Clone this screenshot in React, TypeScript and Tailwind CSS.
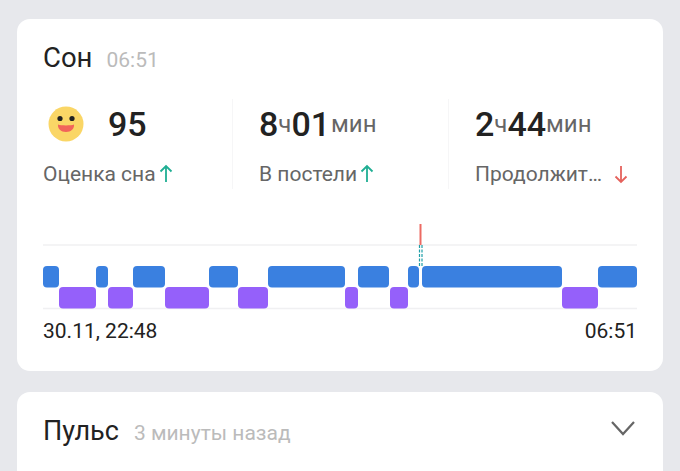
import React from 'react';

const FONT = 'font-["Roboto","Noto_Sans",sans-serif]';

const awake: [number, number][] = [
  [43, 59], [96, 108], [133, 165], [209, 238], [268, 345], [358, 389], [408, 419], [422, 562], [598, 637],
];
const light: [number, number][] = [
  [59, 96], [108, 133], [165, 209], [238, 268], [345, 358], [390, 408], [562, 598],
];

const Arrow: React.FC<{ down?: boolean; color: string }> = ({ down, color }) => (
  <svg width="16" height="20" viewBox="0 0 16 20" fill="none" stroke={color} strokeWidth="1.8">
    {down ? (
      <path d="M8 2v16M2.5 12.5L8 18l5.5-5.5" />
    ) : (
      <path d="M8 18V2M2.5 7.5L8 2l5.5 5.5" />
    )}
  </svg>
);

const Smiley = () => (
  <svg width="36" height="36" viewBox="0 0 36 36">
    <circle cx="18" cy="18" r="17.5" fill="#fad666" />
    <circle cx="12" cy="12.5" r="2.6" fill="#222" />
    <circle cx="24" cy="12.5" r="2.6" fill="#222" />
    <path d="M10 18.5c3 1.2 13 1.2 16 0 .6 4-3 7.500-8 7.500s-8.600-3.500-8-7.500z" fill="#f2645a" />
  </svg>
);

const Num: React.FC<{ children: React.ReactNode }> = ({ children }) => (
  <span className="text-[34px] font-medium text-[#222]">{children}</span>
);
const Unit: React.FC<{ children: React.ReactNode }> = ({ children }) => (
  <span className="text-[24px] text-[#666]">{children}</span>
);

const SleepChart = () => (
  <svg width="646" height="95" viewBox="17 224 646 95" className="block">
    <line x1="43" x2="637" y1="245" y2="245" stroke="#f0f0f2" strokeWidth="1.500" />
    <line x1="43" x2="637" y1="308.500" y2="308.500" stroke="#f0f0f2" strokeWidth="1.500" />
    {awake.map(([a, b]) => (
      <rect key={a} x={a} y={266} width={b - a} height={21.500} rx={4} fill="#3a80e0" />
    ))}
    {light.map(([a, b]) => (
      <rect key={a} x={a} y={287} width={b - a} height={21.500} rx={4} fill="#9560fa" />
    ))}
    <line x1="420.500" x2="420.500" y1="224" y2="245" stroke="#ec6a62" strokeWidth="2" />
    <line x1="419.500" x2="419.500" y1="245" y2="267" stroke="#1f9fa8" strokeWidth="1.200" strokeDasharray="3 1.500" />
    <line x1="422" x2="422" y1="245" y2="267" stroke="#1f9fa8" strokeWidth="1.200" strokeDasharray="3 1.500" />
  </svg>
);

export default function App() {
  return (
    <div className={`${FONT} h-[471px] w-[680px] overflow-hidden bg-[#e7e8ec] px-[17px] pt-[19px]`}>
      {/* Sleep card */}
      <div className="h-[352px] rounded-[13px] bg-white">
        <div className="flex items-baseline gap-[14px] px-[26px] pt-[21px] leading-[36px]">
          <span className="text-[27.5px] text-[#222]">Сон</span>
          <span className="text-[21px] text-[#bbb]">06:51</span>
        </div>

        <div className="mt-[21px] grid h-[90px] grid-cols-[215px_216px_1fr]">
          <div className="pl-[26px]">
            <div className="flex h-[50px] items-center">
              <div className="ml-[5px]"><Smiley /></div>
              <div className="ml-[24px]"><Num>95</Num></div>
            </div>
            <div className="mt-[13px] flex items-center gap-[2px] text-[21px] leading-[24px] text-[#666]">
              Оценка сна<Arrow color="#1fae93" />
            </div>
          </div>
          <div className="border-l border-[#f6f6f7] pl-[26px]">
            <div className="flex h-[50px] items-center">
              <Num>8</Num><Unit>ч</Unit><Num>01</Num><span className="ml-[1px]"><Unit>мин</Unit></span>
            </div>
            <div className="mt-[13px] flex items-center gap-[2px] text-[21px] leading-[24px] text-[#666]">
              В постели<Arrow color="#1fae93" />
            </div>
          </div>
          <div className="border-l border-[#f6f6f7] pl-[26px]">
            <div className="flex h-[50px] items-center">
              <Num>2</Num><Unit>ч</Unit><Num>44</Num><Unit>мин</Unit>
            </div>
            <div className="mt-[13px] flex items-center text-[21px] leading-[24px] text-[#666]">
              Продолжит…<span className="ml-[11px] flex"><Arrow down color="#e5625c" /></span>
            </div>
          </div>
        </div>

        <div className="mt-[35px]"><SleepChart /></div>

        <div className="flex justify-between px-[26px] text-[21px] font-[450] leading-[24px] text-[#222]">
          <span>30.11, 22:48</span>
          <span>06:51</span>
        </div>
      </div>

      {/* Pulse card */}
      <div className="mt-[21px] flex h-[100px] items-start justify-between rounded-t-[13px] bg-white px-[26px] pt-[21px]">
        <div className="flex items-baseline gap-[15px] leading-[36px]">
          <span className="text-[27px] text-[#222]">Пульс</span>
          <span className="text-[21px] text-[#bbb]">3 минуты назад</span>
        </div>
        <svg width="26" height="18" viewBox="0 0 26 18" fill="none" stroke="#666" strokeWidth="2.200" className="mt-[7px] mr-[1px]">
          <path d="M2 2l11 12L24 2" />
        </svg>
      </div>
    </div>
  );
}
